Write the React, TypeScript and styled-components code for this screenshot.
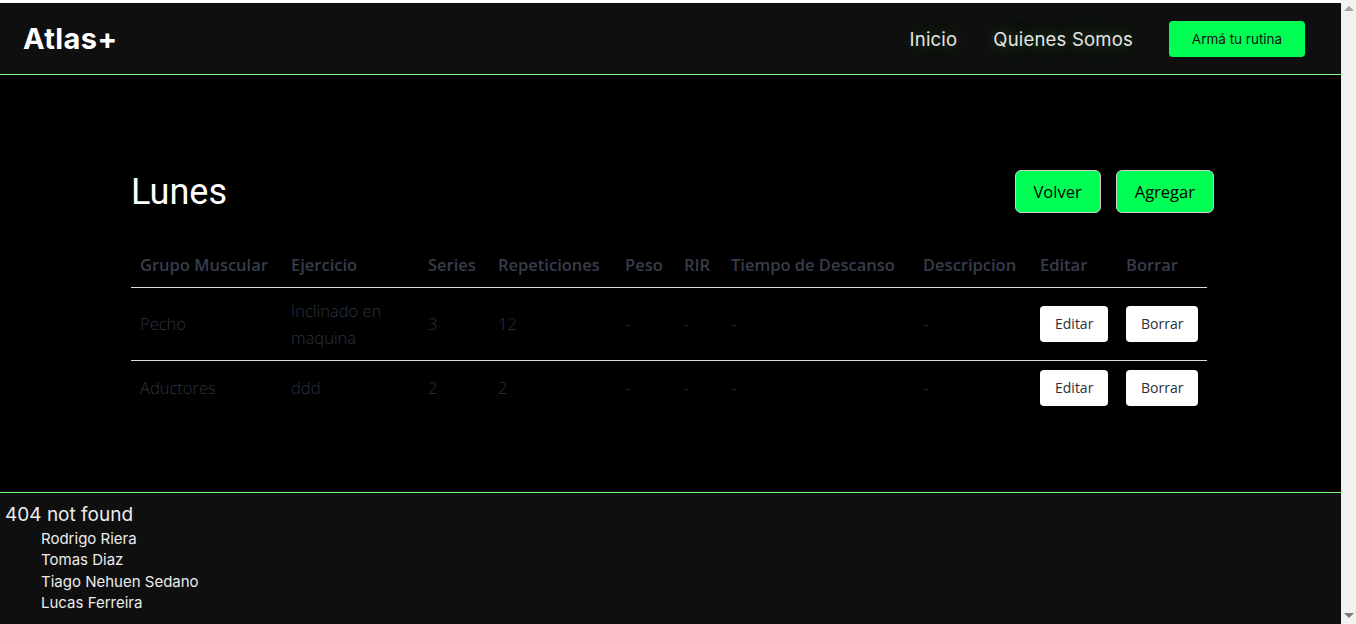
import React from 'react'
import styled, { createGlobalStyle } from 'styled-components'

const GlobalStyle = createGlobalStyle`
    html, body {
        margin: 0;
        padding: 0;
        background: #ffffff;
    }
    body {
        padding-top: 3px;
    }
`

const Page = styled.div`
    display: flex;
    flex-direction: column;
    margin-right: 15px;
    background: #000;
`

const ScrollTrack = styled.div`
    position: fixed;
    top: 0;
    right: 0;
    bottom: 0;
    width: 15px;
    display: flex;
    flex-direction: column;
    justify-content: space-between;
    align-items: center;
    background: #f1f1f1;
`

const Arrow = styled.div<{ $down?: boolean }>`
    width: 0;
    height: 0;
    margin: 6px 0;
    border-left: 5px solid transparent;
    border-right: 5px solid transparent;
    ${(p) => (p.$down ? 'border-top: 5px solid #7a7a7a;' : 'border-bottom: 5px solid #a3a3a3;')}
`

const NavBar = styled.header`
    display: flex;
    align-items: center;
    justify-content: space-between;
    height: 71px;
    padding: 0 36px 0 23px;
    background: #0f0f0f;
    border-bottom: 1px solid #7dff7d;
`

const Logo = styled.div`
    font-family: Inter, "Open Sans", sans-serif;
    font-weight: 700;
    font-size: 29px;
    letter-spacing: 0.4px;
    color: #fff;
`

const NavLinks = styled.nav`
    display: flex;
    align-items: center;
    gap: 36px;
`

const NavLink = styled.a`
    font-family: Inter, "Open Sans", sans-serif;
    font-size: 18.5px;
    font-weight: 400;
    letter-spacing: 0.2px;
    color: #e6e6e6;
    text-decoration: none;
    text-shadow: 0 0 18px rgba(150, 255, 150, 0.35), 0 0 36px rgba(130, 230, 130, 0.3);
    cursor: pointer;
`

const CtaButton = styled.button`
    width: 136px;
    height: 36px;
    border: none;
    border-radius: 4px;
    background: #00ff55;
    color: #111;
    font-family: Inter, "Open Sans", sans-serif;
    font-size: 13.5px;
    cursor: pointer;
`

const Main = styled.main`
    background: #000;
    padding: 95px 0 77px 131px;
`

const Container = styled.div`
    width: 1083px;
    display: flex;
    flex-direction: column;
    gap: 30px;
`

const TitleRow = styled.div`
    display: flex;
    align-items: center;
    justify-content: space-between;
    height: 43px;
`

const Title = styled.h1`
    margin: 0;
    font-family: Roboto, "Liberation Sans", sans-serif;
    font-weight: 400;
    font-size: 36px;
    color: #fff;
`

const Actions = styled.div`
    display: flex;
    gap: 15px;
`

const GreenButton = styled.button`
    height: 43px;
    padding: 0 18px;
    border: 1px solid #cfcfcf;
    border-radius: 6px;
    background: #00ff55;
    color: #000;
    font-family: "Open Sans", "Noto Sans", sans-serif;
    font-size: 16.5px;
    cursor: pointer;
`

const Table = styled.table`
    width: 1076px;
    border-collapse: collapse;
    table-layout: fixed;
    font-family: "Open Sans", "Noto Sans", sans-serif;
`

const Th = styled.th<{ $w: number }>`
    box-sizing: border-box;
    width: ${(p) => p.$w}px;
    height: 44px;
    padding: 0 9px;
    text-align: left;
    white-space: nowrap;
    font-size: 16.5px;
    font-weight: 600;
    color: #373d4a;
    border-bottom: 1px solid #dcdcdc;
`

const Tr = styled.tr<{ $last?: boolean }>`
    border-bottom: ${(p) => (p.$last ? 'none' : '1px solid #dcdcdc')};
`

const Td = styled.td`
    padding: 9px;
    font-size: 16.5px;
    font-weight: 300;
    line-height: 27px;
    color: #2e3340;
    vertical-align: middle;
`

const RowButton = styled.button`
    height: 36px;
    padding: 0 15px;
    border: none;
    border-radius: 4px;
    background: #fff;
    color: #2b2f38;
    font-family: "Open Sans", "Noto Sans", sans-serif;
    font-size: 14px;
    cursor: pointer;
`

const Footer = styled.footer`
    background: #0f0f0f;
    border-top: 1px solid #7dff7d;
    padding: 10px 0 28px 5px;
    font-family: Inter, "Open Sans", sans-serif;
    color: #ececec;
`

const FooterTitle = styled.div`
    font-size: 19px;
    line-height: 24px;
`

const Names = styled.ul`
    list-style: none;
    margin: 0;
    padding: 1px 0 0 36px;
`

const Name = styled.li`
    font-size: 15px;
    line-height: 21.5px;
`

const columns = [
    { label: 'Grupo Muscular', w: 151 },
    { label: 'Ejercicio', w: 137 },
    { label: 'Series', w: 70 },
    { label: 'Repeticiones', w: 127 },
    { label: 'Peso', w: 59 },
    { label: 'RIR', w: 47 },
    { label: 'Tiempo de Descanso', w: 192 },
    { label: 'Descripcion', w: 117 },
    { label: 'Editar', w: 86 },
    { label: 'Borrar', w: 90 },
]

const rows = [
    { grupo: 'Pecho', ejercicio: 'Inclinado en maquina', series: '3', reps: '12' },
    { grupo: 'Aductores', ejercicio: 'ddd', series: '2', reps: '2' },
]

const names = ['Rodrigo Riera', 'Tomas Diaz', 'Tiago Nehuen Sedano', 'Lucas Ferreira']

export default function App() {
    return (
        <Page>
            <GlobalStyle />
            <NavBar>
                <Logo>Atlas+</Logo>
                <NavLinks>
                    <NavLink>Inicio</NavLink>
                    <NavLink>Quienes Somos</NavLink>
                    <CtaButton>Armá tu rutina</CtaButton>
                </NavLinks>
            </NavBar>
            <Main>
                <Container>
                    <TitleRow>
                        <Title>Lunes</Title>
                        <Actions>
                            <GreenButton>Volver</GreenButton>
                            <GreenButton>Agregar</GreenButton>
                        </Actions>
                    </TitleRow>
                    <Table>
                        <thead>
                            <tr>
                                {columns.map((c) => (
                                    <Th key={c.label} $w={c.w}>{c.label}</Th>
                                ))}
                            </tr>
                        </thead>
                        <tbody>
                            {rows.map((r, i) => (
                                <Tr key={i} $last={i === rows.length - 1}>
                                    <Td>{r.grupo}</Td>
                                    <Td>{r.ejercicio}</Td>
                                    <Td>{r.series}</Td>
                                    <Td>{r.reps}</Td>
                                    <Td>-</Td>
                                    <Td>-</Td>
                                    <Td>-</Td>
                                    <Td>-</Td>
                                    <Td><RowButton>Editar</RowButton></Td>
                                    <Td><RowButton>Borrar</RowButton></Td>
                                </Tr>
                            ))}
                        </tbody>
                    </Table>
                </Container>
            </Main>
            <Footer>
                <FooterTitle>404 not found</FooterTitle>
                <Names>
                    {names.map((n) => (
                        <Name key={n}>{n}</Name>
                    ))}
                </Names>
            </Footer>
            <ScrollTrack>
                <Arrow />
                <Arrow $down />
            </ScrollTrack>
        </Page>
    )
}
